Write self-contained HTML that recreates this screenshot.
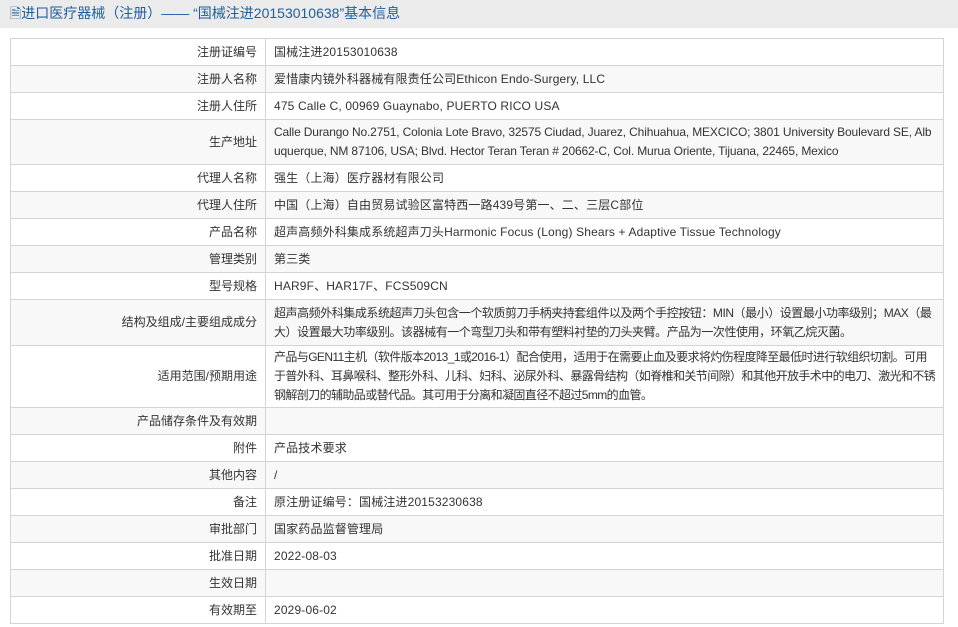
<!DOCTYPE html><html><head><meta charset="utf-8"><style>
body{margin:0;width:958px;height:627px;overflow:hidden;background:#fff;font-family:"Liberation Sans","Noto Sans CJK SC",sans-serif;font-size:12px;color:#333}
.hd{height:28px;background:#ebebeb;color:#1f5fa0;font-size:14px;line-height:27px;padding-left:10px}
table{position:absolute;left:10px;top:38px;width:934px;border-collapse:collapse;table-layout:fixed}
td{border:1px solid #d4d4d4;padding:0 8px;line-height:19px;white-space:nowrap;overflow:hidden;letter-spacing:0.15px}
td.l{width:238px;text-align:right;letter-spacing:0}
td.c{letter-spacing:-0.45px;padding-right:2px}
td.d{letter-spacing:-0.6px;padding-right:2px}
td.a{letter-spacing:-0.15px;padding-right:2px}
tr:nth-child(even) td{background:#f8f8f8}
</style></head><body>
<div class="hd">🗎进口医疗器械（注册）—— “国械注进20153010638”基本信息</div>
<table>
<tr style="height:27px"><td class="l">注册证编号</td><td>国械注进20153010638</td></tr>
<tr style="height:27px"><td class="l">注册人名称</td><td>爱惜康内镜外科器械有限责任公司Ethicon Endo-Surgery, LLC</td></tr>
<tr style="height:27px"><td class="l">注册人住所</td><td>475 Calle C, 00969 Guaynabo, PUERTO RICO USA</td></tr>
<tr style="height:45px"><td class="l">生产地址</td><td class="a">Calle Durango No.2751, Colonia Lote Bravo, 32575 Ciudad, Juarez, Chihuahua, MEXCICO; 3801 University Boulevard SE, Alb<br>uquerque, NM 87106, USA; Blvd. Hector Teran Teran # 20662-C, Col. Murua Oriente, Tijuana, 22465, Mexico</td></tr>
<tr style="height:27px"><td class="l">代理人名称</td><td>强生（上海）医疗器材有限公司</td></tr>
<tr style="height:27px"><td class="l">代理人住所</td><td>中国（上海）自由贸易试验区富特西一路439号第一、二、三层C部位</td></tr>
<tr style="height:27px"><td class="l">产品名称</td><td>超声高频外科集成系统超声刀头Harmonic Focus (Long) Shears + Adaptive Tissue Technology</td></tr>
<tr style="height:27px"><td class="l">管理类别</td><td>第三类</td></tr>
<tr style="height:27px"><td class="l">型号规格</td><td>HAR9F、HAR17F、FCS509CN</td></tr>
<tr style="height:46px"><td class="l">结构及组成/主要组成成分</td><td class="c">超声高频外科集成系统超声刀头包含一个软质剪刀手柄夹持套组件以及两个手控按钮：MIN（最小）设置最小功率级别；MAX（最<br>大）设置最大功率级别。该器械有一个弯型刀头和带有塑料衬垫的刀头夹臂。产品为一次性使用，环氧乙烷灭菌。</td></tr>
<tr style="height:62px"><td class="l">适用范围/预期用途</td><td class="d">产品与GEN11主机（软件版本2013_1或2016-1）配合使用，适用于在需要止血及要求将灼伤程度降至最低时进行软组织切割。可用<br>于普外科、耳鼻喉科、整形外科、儿科、妇科、泌尿外科、暴露骨结构（如脊椎和关节间隙）和其他开放手术中的电刀、激光和不锈<br>钢解剖刀的辅助品或替代品。其可用于分离和凝固直径不超过5mm的血管。</td></tr>
<tr style="height:27px"><td class="l">产品储存条件及有效期</td><td></td></tr>
<tr style="height:27px"><td class="l">附件</td><td>产品技术要求</td></tr>
<tr style="height:27px"><td class="l">其他内容</td><td>/</td></tr>
<tr style="height:27px"><td class="l">备注</td><td>原注册证编号：国械注进20153230638</td></tr>
<tr style="height:27px"><td class="l">审批部门</td><td>国家药品监督管理局</td></tr>
<tr style="height:27px"><td class="l">批准日期</td><td>2022-08-03</td></tr>
<tr style="height:27px"><td class="l">生效日期</td><td></td></tr>
<tr style="height:27px"><td class="l">有效期至</td><td>2029-06-02</td></tr>
</table>
</body></html>
